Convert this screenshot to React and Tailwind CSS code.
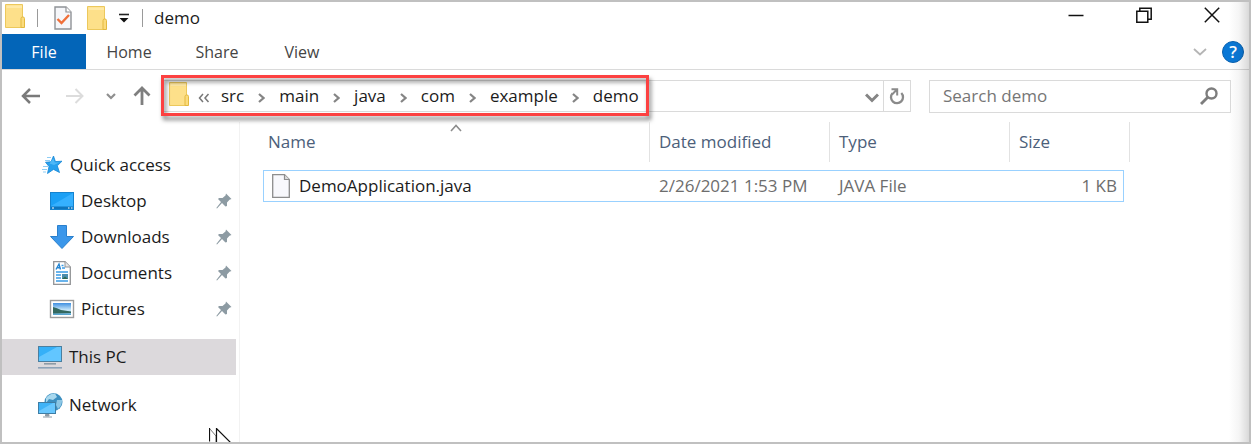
import React from "react";

function FolderIcon({ className = "" }) {
  return (
    <svg className={`shrink-0 ${className}`} width="20" height="24" viewBox="0 0 20 24" aria-hidden="true">
      <path d="M0.5 0.5H17.5V23.5H0.5Z" fill="#fde08a" stroke="#ecc85c" />
      <path d="M1.5 1.5H17V4H1.5Z" fill="#ffe9a6" />
      <path d="M16 23.5V14.5Q16 13 17.5 13H18Q19.5 13 19.5 14.5V23.5Z" fill="#fbdb7c" stroke="#e3b93f" />
    </svg>
  );
}

function CheckedPageIcon() {
  return (
    <svg className="shrink-0" width="18" height="24" viewBox="0 0 18 24" aria-hidden="true">
      <path d="M1 1H12L17 6V23H1Z" fill="#f6f7fa" stroke="#8f9296" strokeWidth="1.4" />
      <path d="M12 1V6H17" fill="#fff" stroke="#8f9296" strokeWidth="1.2" />
      <path d="M3.5 13L7.5 17L15 9" fill="none" stroke="#f0703a" strokeWidth="2.4" />
    </svg>
  );
}

function PageIcon() {
  return (
    <svg className="shrink-0" width="18" height="24" viewBox="0 0 18 24" aria-hidden="true">
      <path d="M0.7 0.7H12.5L17.3 5.5V23.3H0.7Z" fill="#f8f8fc" stroke="#8d8d8d" strokeWidth="1.3" />
      <path d="M12.5 0.7V5.5H17.3" fill="#ddd" stroke="#8d8d8d" strokeWidth="1.2" />
    </svg>
  );
}

function StarIcon() {
  return (
    <svg width="22" height="20" viewBox="0 0 22 20" aria-hidden="true">
      <path d="M12.500 1L14.400 6.600L21 6.200L16.300 10.800L18.500 17.500L12.500 14.400L6.500 18.500L8 11.500L4.500 7.200L10 6.800Z" fill="#27a0ee" stroke="#1888d6" strokeWidth="0.8" />
      <path d="M12.300 3.500L13.800 7.500L18.500 7.200L13 10L8.500 8.500Z" fill="#4fb8f7" />
      <path d="M6 2.500H10M4 5.500H9M2 11.500H7M1 14.500H6M2 17H5" stroke="#8ecdf5" strokeWidth="1.200" />
    </svg>
  );
}

function DesktopIcon() {
  return (
    <svg width="26" height="20" viewBox="0 0 26 20" aria-hidden="true">
      <rect x="1.5" y="1.5" width="23" height="17" fill="#1ba0f5" stroke="#1583cf" />
      <path d="M2 15L24 2V16H2Z" fill="#35b0ff" />
      <rect x="2" y="15.5" width="22" height="2.5" fill="#0e75bd" />
      <path d="M3 17H5M19 17H20.5M22 17H23.5" stroke="#fff" />
    </svg>
  );
}

function DownloadIcon() {
  return (
    <svg width="26" height="26" viewBox="0 0 26 26" aria-hidden="true">
      <path d="M8.5 1.5H17.5V12.5H24.5L13 24.5L1.5 12.5H8.5Z" fill="#3b97ea" stroke="#2a80cd" />
    </svg>
  );
}

function DocumentIcon() {
  return (
    <svg width="20" height="26" viewBox="0 0 20 26" aria-hidden="true">
      <path d="M1.7 1.7H13L18.3 7V24.3H1.7Z" fill="#fff" stroke="#929497" strokeWidth="1.3" />
      <path d="M13 1.7V7H18.3" fill="#e6e6e6" stroke="#929497" />
      <path d="M4 9.5L7 4L8.5 9.5M5.5 7.8H8" fill="none" stroke="#2385d3" strokeWidth="1.4" />
      <path d="M9.5 5.5H11.5M10 8H13M4 12H16M4 15H9M4 18H9M4 21H16" stroke="#399be5" strokeWidth="1.3" />
      <rect x="10" y="14" width="6" height="5" fill="#4c8dae" />
      <path d="M10 19L13 16.5L16 19Z" fill="#326b52" />
    </svg>
  );
}

function PictureIcon() {
  return (
    <svg width="26" height="20" viewBox="0 0 26 20" aria-hidden="true">
      <defs>
        <linearGradient id="sky" x1="0" y1="0" x2="0" y2="1">
          <stop offset="0" stopColor="#3f8fe0" />
          <stop offset="0.6" stopColor="#cdeafa" />
          <stop offset="1" stopColor="#4a9dcb" />
        </linearGradient>
      </defs>
      <rect x="1.5" y="1.5" width="23" height="17" fill="#fff" stroke="#9b9b9b" strokeWidth="1.4" />
      <rect x="4" y="4" width="18" height="12" fill="url(#sky)" />
      <path d="M4 8Q8 9 12 11L22 12.5V14L4 14.5Z" fill="#34695f" />
    </svg>
  );
}

function ComputerIcon() {
  return (
    <svg width="26" height="24" viewBox="0 0 26 24" aria-hidden="true">
      <rect x="1.5" y="1.5" width="23" height="15" fill="#35b0f8" stroke="#4b7f9f" />
      <path d="M2 12L20 2H24V2L24 16H2Z" fill="#62c6ff" />
      <path d="M7 18.8H19" stroke="#8d9aa5" strokeWidth="1.6" />
      <path d="M1 22.8H25" stroke="#8ea3b8" strokeWidth="1.6" />
    </svg>
  );
}

function NetworkIcon() {
  return (
    <svg width="26" height="26" viewBox="0 0 26 26" aria-hidden="true">
      <circle cx="16.5" cy="10" r="9" fill="#3c8fc0" />
      <path d="M9 6Q13 1 18 1.5L20 5L16 8L12 7L9 11Z" fill="#a8d8ee" />
      <path d="M20 8L25 8Q25.5 13 21 17L19 13Z" fill="#8cc6e4" />
      <rect x="1.5" y="10.500" width="17" height="11" fill="#3fb3f7" stroke="#3e7ea6" />
      <path d="M2 19L16 11H18V21H2Z" fill="#68c7fe" />
      <path d="M8.500 22.500H12V24H8.500ZM6 25H15" fill="#8d9aa5" stroke="#8d9aa5" />
    </svg>
  );
}

function PinIcon() {
  return (
    <svg width="16" height="16" viewBox="0 0 16 16" aria-hidden="true">
      <path d="M10 0.500L15.500 6L13.500 6.800L11 9.500L11 13L9.500 13.500L6 10L1 15.500L0.300 15L5 9L2 6L3 5L6.500 5L9.500 2.500Z" fill="#8d9ba3" />
    </svg>
  );
}

function Crumb({ children }) {
  return (
    <a href="#" className="leading-6 text-[#1b1b1b]">
      {children}
    </a>
  );
}

function CrumbArrow() {
  return (
    <svg className="mt-1 shrink-0" width="7" height="10" viewBox="0 0 7 10" aria-hidden="true">
      <path d="M1 1L5.500 5L1 9" fill="none" stroke="#858585" strokeWidth="2.200" />
    </svg>
  );
}

const crumbs = ["src", "main", "java", "com", "example", "demo"];

const pinned = [
  { name: "Desktop", Icon: DesktopIcon },
  { name: "Downloads", Icon: DownloadIcon },
  { name: "Documents", Icon: DocumentIcon },
  { name: "Pictures", Icon: PictureIcon },
];

function TitleBar() {
  return (
    <header className="flex h-8 items-center pl-[3px] pr-[3px]">
      <FolderIcon className="-mt-1" />
      <span className="ml-3 h-[18px] w-px bg-[#9a9a9a]" />
      <button type="button" aria-label="Properties" className="ml-4">
        <CheckedPageIcon />
      </button>
      <button type="button" aria-label="New folder" className="ml-[15px]">
        <FolderIcon />
      </button>
      <button type="button" aria-label="Customize toolbar" className="ml-[11px]">
        <svg width="12" height="10" viewBox="0 0 12 10" aria-hidden="true">
          <path d="M1 1.500H11" stroke="#222" strokeWidth="1.600" />
          <path d="M1.500 5H10.500L6 9.500Z" fill="#111" />
        </svg>
      </button>
      <span className="ml-3 h-[18px] w-px bg-[#9a9a9a]" />
      <h1 className="ml-[11px] flex-1 text-[17px] leading-6 text-[#1b1b1b]">demo</h1>
      <div className="flex self-start">
        <button type="button" aria-label="Minimize" className="flex h-[26px] w-[68px] items-center justify-center">
          <svg width="16" height="16" viewBox="0 0 16 16" aria-hidden="true">
            <path d="M0.500 8.500H15.500" stroke="#111" strokeWidth="1.500" />
          </svg>
        </button>
        <button type="button" aria-label="Restore" className="flex h-[26px] w-[68px] items-center justify-center">
          <svg width="16" height="16" viewBox="0 0 16 16" fill="none" stroke="#111" strokeWidth="1.500" aria-hidden="true">
            <path d="M0.800 4.200H11.800V15.200H0.800Z" />
            <path d="M3.800 4V1.200H15.200V12.200H12" />
          </svg>
        </button>
        <button type="button" aria-label="Close" className="flex h-[26px] w-[68px] items-center justify-center">
          <svg width="16" height="16" viewBox="0 0 16 16" stroke="#111" strokeWidth="1.500" aria-hidden="true">
            <path d="M0.800 0.800L15.200 15.200M15.200 0.800L0.800 15.200" />
          </svg>
        </button>
      </div>
    </header>
  );
}

function Ribbon() {
  return (
    <div className="flex h-9 border-b border-[#dadada] text-[16px] leading-6 text-[#444]">
      <button type="button" className="w-[84px] bg-[#0365b8] text-white">File</button>
      <button type="button" className="w-[86px]">Home</button>
      <button type="button" className="w-[90px]">Share</button>
      <button type="button" className="w-20">View</button>
      <div className="ml-auto flex items-center gap-[15px] pr-[5px]">
        <button type="button" aria-label="Expand the ribbon">
          <svg width="14" height="8" viewBox="0 0 14 8" aria-hidden="true">
            <path d="M1 1L7 6.500L13 1" fill="none" stroke="#b5b5b5" strokeWidth="1.800" />
          </svg>
        </button>
        <button type="button" aria-label="Help" className="flex size-[22px] items-center justify-center rounded-full border border-[#0a62b0] bg-[#0a78d6] text-[17px] font-semibold leading-5 text-white">
          ?
        </button>
      </div>
    </div>
  );
}

function NavigationBar() {
  return (
    <div className="flex h-[52px] items-center pl-[19px] pr-[18px]">
      <button type="button" aria-label="Back">
        <svg width="19" height="16" viewBox="0 0 19 16" fill="none" stroke="#7a7a7a" strokeWidth="2.500" aria-hidden="true">
          <path d="M19 8H2M9 1L2 8L9 15" />
        </svg>
      </button>
      <button type="button" aria-label="Forward" className="ml-[26px]">
        <svg width="18" height="16" viewBox="0 0 18 16" fill="none" stroke="#dcdcdc" strokeWidth="2" aria-hidden="true">
          <path d="M0 8H16.500M9.500 1L16.500 8L9.500 15" />
        </svg>
      </button>
      <button type="button" aria-label="Recent locations" className="ml-[22px]">
        <svg width="10" height="7" viewBox="0 0 10 7" aria-hidden="true">
          <path d="M1 1L5 5L9 1" fill="none" stroke="#8f8f8f" strokeWidth="2.200" />
        </svg>
      </button>
      <button type="button" aria-label="Up one level" className="ml-[17px]">
        <svg width="18" height="20" viewBox="0 0 18 20" fill="none" stroke="#7f7f7f" strokeWidth="2.800" aria-hidden="true">
          <path d="M9 19V2M1.500 9.500L9 2L16.500 9.500" />
        </svg>
      </button>
      <div className="ml-[11px] flex h-8 flex-1 border border-[#dadada]">
        <nav aria-label="Location" className="relative flex items-center gap-[14px] pl-[6px] pr-2 text-[17px]">
          <FolderIcon className="-mt-1" />
          <svg className="-ml-[5px] -mr-[3px] mt-1 shrink-0" width="12" height="10" viewBox="0 0 12 10" aria-hidden="true">
            <path d="M5 1L1.500 5L5 9M10.500 1L7 5L10.500 9" fill="none" stroke="#777" strokeWidth="1.500" />
          </svg>
          {crumbs.map((name, i) => (
            <React.Fragment key={name}>
              {i > 0 && <CrumbArrow />}
              <Crumb>{name}</Crumb>
            </React.Fragment>
          ))}
          <span className="pointer-events-none absolute -inset-x-[2px] -bottom-[5px] -top-[6px] border-[3px] border-[#fc4141] drop-shadow-[2px_4px_2px_rgba(0,0,0,0.5)]" />
        </nav>
        <button type="button" aria-label="Previous locations" className="ml-auto px-1 pt-1">
          <svg width="14" height="10" viewBox="0 0 14 10" aria-hidden="true">
            <path d="M1 1.500L7 7.500L13 1.500" fill="none" stroke="#858585" strokeWidth="3" />
          </svg>
        </button>
        <button type="button" aria-label="Refresh" className="border-l border-[#dadada] px-[5px]">
          <svg width="16" height="18" viewBox="0 0 16 18" fill="none" stroke="#8a8a8a" strokeWidth="2.300" aria-hidden="true">
            <path d="M12.300 6A6 6 0 1 1 3.500 6.200" />
            <path d="M2.500 2.200H8.200V8.500M3 7.500L8 2.500" strokeWidth="2" />
          </svg>
        </button>
      </div>
      <label className="ml-[18px] flex h-[33px] w-[302px] items-center border border-[#dadada] pl-[13px] pr-3">
        <input
          type="text"
          aria-label="Search demo"
          placeholder="Search demo"
          className="min-w-0 flex-1 bg-transparent text-[17px] leading-6 text-[#1b1b1b] outline-none placeholder:text-[#767676]"
        />
        <svg width="18" height="18" viewBox="0 0 18 18" fill="none" stroke="#7d7d7d" aria-hidden="true">
          <circle cx="11.500" cy="6.500" r="5" strokeWidth="2.400" />
          <path d="M8 10L1 17" strokeWidth="2.800" />
        </svg>
      </label>
    </div>
  );
}

function Sidebar() {
  return (
    <aside className="flex w-[238px] shrink-0 flex-col border-r border-[#f2f2f2] pr-[3px] pt-[25px] text-[17px] leading-6 text-[#1b1b1b]">
      <a href="#" className="flex h-9 items-center pl-[39px]">
        <span className="w-[29px]"><StarIcon /></span>
        Quick access
      </a>
      {pinned.map(({ name, Icon }) => (
        <a href="#" key={name} className="flex h-9 items-center pl-[47px] pr-1">
          <span className="flex w-[26px] justify-center"><Icon /></span>
          <span className="ml-[6px] flex-1">{name}</span>
          <PinIcon />
        </a>
      ))}
      <a href="#" className="mt-3 flex h-9 items-center bg-[#dcd9dc] pl-[35px]">
        <span className="w-8"><ComputerIcon /></span>
        This PC
      </a>
      <a href="#" className="mt-3 flex h-9 items-center pl-[35px]">
        <span className="w-8"><NetworkIcon /></span>
        Network
      </a>
    </aside>
  );
}

function HeaderCell({ children, sorted = false, first = false, span }) {
  return (
    <th scope="col" colSpan={span} className="h-12 p-0 pb-2 text-left align-top font-normal">
      <div className={`relative flex h-10 items-center border-r border-[#e2e2e2] ${first ? "pl-[5px]" : "pl-[9px]"}`}>
        {children}
        {sorted && (
          <svg className="absolute inset-x-0 top-[2px] mx-auto" width="12" height="8" viewBox="0 0 12 8" aria-hidden="true">
            <path d="M1 7L6 1.500L11 7" fill="none" stroke="#8c8c8c" strokeWidth="1.600" />
          </svg>
        )}
      </div>
    </th>
  );
}

function FileList() {
  return (
    <main className="min-w-0 flex-1 pl-[23px]">
      <table className="w-[867px] table-fixed border-separate border-spacing-0 text-[17px] leading-6">
        <colgroup>
          <col className="w-[387px]" />
          <col className="w-[180px]" />
          <col className="w-[180px]" />
          <col className="w-[114px]" />
          <col className="w-[6px]" />
        </colgroup>
        <thead className="text-[#4c607a]">
          <tr>
            <HeaderCell first sorted>Name</HeaderCell>
            <HeaderCell>Date modified</HeaderCell>
            <HeaderCell>Type</HeaderCell>
            <HeaderCell span={2}>Size</HeaderCell>
          </tr>
        </thead>
        <tbody className="text-[#6d6d6d]">
          <tr className="h-8">
            <td className="border-y border-l border-[#99d1ff] p-0 pl-2">
              <a href="#" className="flex items-center gap-[9px] text-[#1b1b1b]">
                <PageIcon />
                DemoApplication.java
              </a>
            </td>
            <td className="border-y border-[#99d1ff] p-0 pl-[9px]">2/26/2021 1:53 PM</td>
            <td className="border-y border-[#99d1ff] p-0 pl-[9px]">JAVA File</td>
            <td className="border-y border-r border-[#99d1ff] p-0 pr-[6px] text-right">1 KB</td>
            <td className="p-0" />
          </tr>
        </tbody>
      </table>
    </main>
  );
}

export default function App() {
  return (
    <div className="relative flex min-h-screen flex-col overflow-hidden border-2 border-[#c0c0c0] bg-white font-['Open_Sans','Noto_Sans',sans-serif]">
      <TitleBar />
      <Ribbon />
      <NavigationBar />
      <div className="flex flex-1">
        <Sidebar />
        <FileList />
      </div>
      <div className="pointer-events-none absolute inset-y-0 right-0 w-5 bg-linear-to-r from-transparent via-black/4 to-black/15" />
      <svg className="pointer-events-none absolute -bottom-[2px] left-[207px]" width="24" height="16" viewBox="0 0 24 16" aria-hidden="true">
        <path d="M0.500 0V13.500" stroke="#111" strokeWidth="1.200" />
        <path d="M1 1L7 8V14" fill="none" stroke="#777" />
        <path d="M7.500 0.500V16H23Z" fill="#fff" />
        <path d="M7.500 16V0.500L23 16" fill="none" stroke="#111" strokeWidth="1.200" />
      </svg>
    </div>
  );
}
